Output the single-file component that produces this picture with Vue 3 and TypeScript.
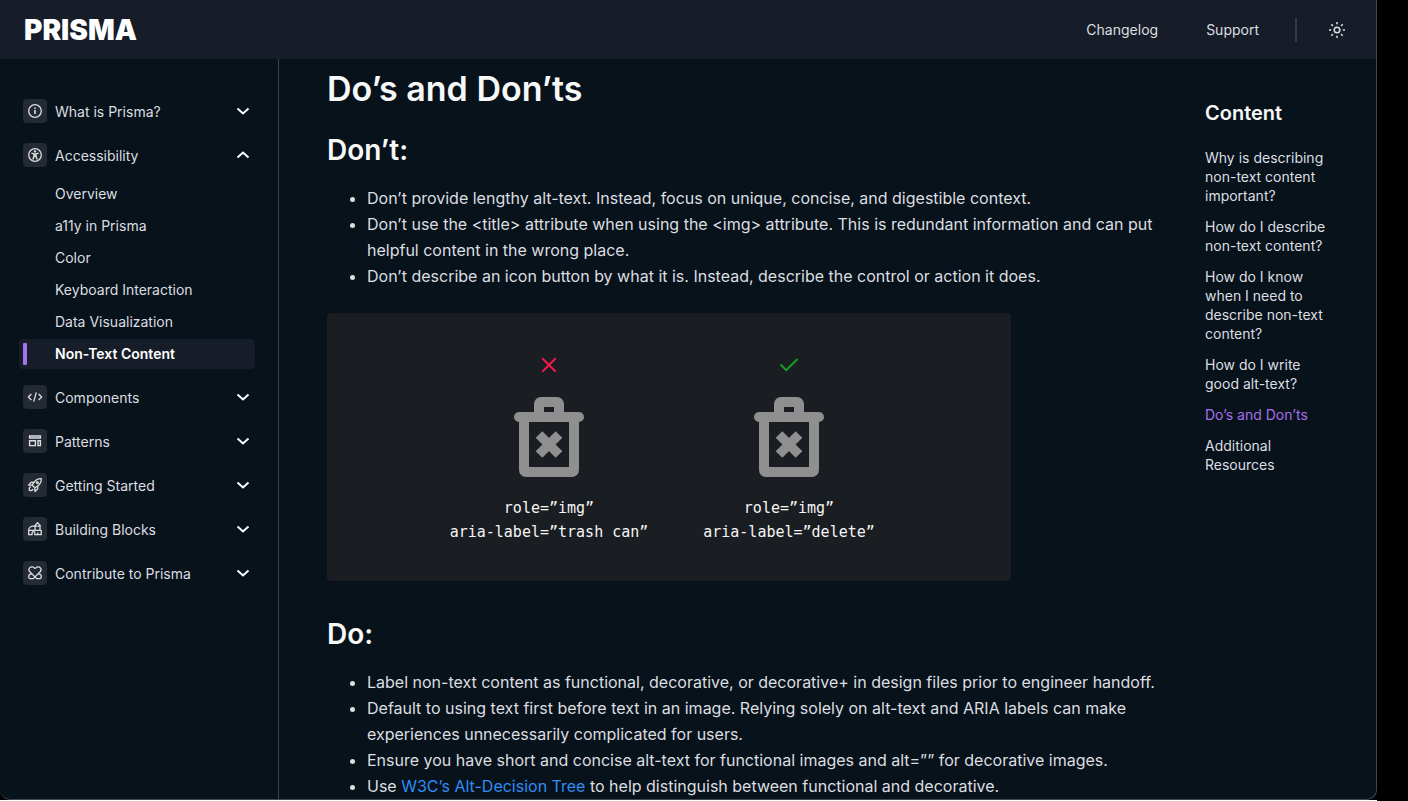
<script setup lang="ts">
import { ref } from 'vue'

interface Group {
  id: string
  label: string
  children: string[]
}

const groups: Group[] = [
  { id: 'info', label: 'What is Prisma?', children: [] },
  {
    id: 'a11y',
    label: 'Accessibility',
    children: ['Overview', 'a11y in Prisma', 'Color', 'Keyboard Interaction', 'Data Visualization', 'Non-Text Content'],
  },
  { id: 'code', label: 'Components', children: [] },
  { id: 'layout', label: 'Patterns', children: [] },
  { id: 'rocket', label: 'Getting Started', children: [] },
  { id: 'blocks', label: 'Building Blocks', children: [] },
  { id: 'heart', label: 'Contribute to Prisma', children: [] },
]

const openGroup = ref('a11y')
const currentPage = ref('Non-Text Content')
const currentSection = ref('Do’s and Don’ts')

const sections: string[] = [
  'Why is describing non-text content important?',
  'How do I describe non-text content?',
  'How do I know when I need to describe non-text content?',
  'How do I write good alt-text?',
  'Do’s and Don’ts',
  'Additional Resources',
]

const examples = [
  { good: false, label: 'aria-label=”trash can”' },
  { good: true, label: 'aria-label=”delete”' },
]

function toggle(id: string) {
  openGroup.value = openGroup.value === id ? '' : id
}
</script>

<template>
  <div class="desktop">
    <div class="window">
      <header class="topbar">
        <a class="logo" href="#">PRISMA</a>
        <nav class="toplinks" aria-label="Site">
          <a href="#changelog">Changelog</a>
          <a href="#support">Support</a>
          <span class="rule"></span>
          <button class="theme" type="button" aria-label="Switch theme">
            <svg viewBox="0 0 18 18" width="18" height="18" fill="none" stroke="currentColor" stroke-width="1.5">
              <circle cx="9" cy="9" r="2.8" />
              <path d="M9 1v2.2M9 14.8V17M1 9h2.2M14.8 9H17M3.3 3.3l1.6 1.6M13.1 13.1l1.6 1.6M3.3 14.7l1.6-1.6M13.1 4.9l1.6-1.6" />
            </svg>
          </button>
        </nav>
      </header>

      <div class="body">
        <nav class="sidebar" aria-label="Documentation">
          <div v-for="g in groups" :key="g.id">
            <button class="group" type="button" :aria-expanded="openGroup === g.id" @click="toggle(g.id)">
              <span class="tile">
                <svg viewBox="0 0 16 16" width="16" height="16" fill="none" stroke="currentColor" stroke-width="1.3" stroke-linejoin="round">
                  <template v-if="g.id === 'info'">
                    <circle cx="8" cy="8" r="6.3" />
                    <path d="M8 7.1v4M8 4.6v1.5" stroke-width="1.6" />
                  </template>
                  <template v-else-if="g.id === 'a11y'">
                    <circle cx="8" cy="8" r="6.3" />
                    <circle cx="8" cy="4.4" r="1.2" fill="currentColor" stroke="none" />
                    <path d="M4.4 6.1l2.6.8v2.3L5.8 12.4M11.6 6.1L9 6.9v2.3l1.2 3.2M7 7h2M7 9.2h2" stroke-width="1.5" />
                  </template>
                  <template v-else-if="g.id === 'code'">
                    <path d="M4.4 5L1.3 8l3.1 3M11.6 5l3.1 3-3.1 3M9.3 3.4L6.7 12.6" />
                  </template>
                  <template v-else-if="g.id === 'layout'">
                    <path d="M2.6 3h10.8v2H2.6zM2.6 7.7h5.8v4.9H2.6zM11 7.7h2.4v4.9H11z" stroke-width="1.4" stroke-linejoin="miter" />
                  </template>
                  <template v-else-if="g.id === 'rocket'">
                    <path d="M14.3 1.6c-3.3 0-5.7 1.2-7.3 3.7L5.2 8.2l2.6 2.6 2.9-1.8c2.5-1.6 3.7-4 3.6-7.4z" />
                    <path d="M7 5.3l-2.7-.1-2.8 2.9 3.7.1M10.7 9l.1 2.7L8 14.5l-.2-3.7M3.7 9.6c-1.5.6-1.6 2.1-1.3 3.8 1.6.4 3.2.1 3.8-1.3" />
                    <circle cx="10.4" cy="5.6" r="0.9" />
                  </template>
                  <template v-else-if="g.id === 'blocks'">
                    <path d="M7.4 4.9C4.2 4.9 1.7 6.6 1.7 9.3v4.4h3.4v-1.9c0-1.6 2.7-1.6 2.7 0v1.9h3v-2.3M1.7 9.3h12.5v4.4h-3.4M8 9.3V5.1h5v4.2M7.4 5.1l3.1-3.5 3.2 3.5" />
                  </template>
                  <template v-else>
                    <path d="M8 3.6C6.6 1.6 4.3 1.3 2.9 2.6 1.6 3.9 1.8 5.7 3.1 7l6.4 6.3h3.3q1.400 0 1.400-1.200v-1.600c0-1.600-1.400-2.200-2.500-1.300L5.800 13.300" stroke="none" />
                    <path d="M8 3.600C6.600 1.600 4.300 1.300 2.900 2.600 1.600 3.900 1.800 5.700 3.100 7l6.600 6.600h3.100q1.400 0 1.400-1.300v-1.500c0-1.500-1.500-2.100-2.500-1.100" />
                    <path d="M8 3.600C9.400 1.600 11.700 1.300 13.100 2.600c1.300 1.300 1.100 3.100-.2 4.400L6.300 13.600H3.200q-1.400 0-1.400-1.300v-1.500c0-1.500 1.500-2.100 2.500-1.100" />
                  </template>
                </svg>
              </span>
              <span class="name">{{ g.label }}</span>
              <svg class="chevron" :class="{ up: openGroup === g.id }" viewBox="0 0 14 14" width="14" height="14" fill="none" stroke="currentColor" stroke-width="2">
                <path d="M1.500 4.500L7 9.500l5.500-5" />
              </svg>
            </button>
            <ul v-if="openGroup === g.id && g.children.length" class="pages">
              <li v-for="p in g.children" :key="p">
                <a href="#" :class="{ active: p === currentPage }" @click.prevent="currentPage = p">{{ p }}</a>
              </li>
            </ul>
          </div>
        </nav>

        <main class="article">
          <h1>Do’s and Don’ts</h1>
          <h2>Don’t:</h2>
          <ul>
            <li>Don’t provide lengthy alt-text. Instead, focus on unique, concise, and digestible context.</li>
            <li>Don’t use the &lt;title&gt; attribute when using the &lt;img&gt; attribute. This is redundant information and can put helpful content in the wrong place.</li>
            <li>Don’t describe an icon button by what it is. Instead, describe the control or action it does.</li>
          </ul>
          <figure>
            <div v-for="e in examples" :key="e.label" class="example">
              <svg v-if="e.good" class="good" viewBox="0 0 24 24" width="24" height="24" fill="none" stroke="currentColor" stroke-width="2">
                <path d="M3.500 11.500L9.200 17.200 20.500 6" />
              </svg>
              <svg v-else class="bad" viewBox="0 0 24 24" width="24" height="24" fill="none" stroke="currentColor" stroke-width="2">
                <path d="M5.300 5.300l13.400 13.400M18.700 5.300L5.300 18.700" />
              </svg>
              <svg class="trash" viewBox="0 0 70 80" width="70" height="80" fill="currentColor">
                <path fill-rule="evenodd" d="M20 15V7a7 7 0 0 1 7-7h16a7 7 0 0 1 7 7v8h15a5 5 0 0 1 0 10v48a7 7 0 0 1-7 7H12a7 7 0 0 1-7-7V25a5 5 0 0 1 0-10zM30 10v5h10v-5zM15 25v45h40V25z" />
                <path d="M25 37.500l20 20M45 37.500l-20 20" stroke="currentColor" stroke-width="9.400" />
              </svg>
              <code>role=”img”<br />{{ e.label }}</code>
            </div>
          </figure>
          <h2>Do:</h2>
          <ul>
            <li>Label non-text content as functional, decorative, or decorative+ in design files prior to engineer handoff.</li>
            <li>Default to using text first before text in an image. Relying solely on alt-text and ARIA labels can make experiences unnecessarily complicated for users.</li>
            <li>Ensure you have short and concise alt-text for functional images and alt=”” for decorative images.</li>
            <li>Use <a href="#">W3C’s Alt-Decision Tree</a> to help distinguish between functional and decorative.</li>
          </ul>
        </main>

        <aside class="toc" aria-labelledby="toc-title">
          <h3 id="toc-title">Content</h3>
          <ul>
            <li v-for="s in sections" :key="s">
              <a href="#" :class="{ active: s === currentSection }" @click.prevent="currentSection = s">{{ s }}</a>
            </li>
          </ul>
        </aside>
      </div>
    </div>
    <div class="edge"></div>
  </div>
</template>

<style>
body {
  margin: 0;
  background: #000;
}
</style>

<style scoped>
* {
  box-sizing: border-box;
}

.desktop {
  display: flex;
  flex-direction: column;
  height: 100vh;
  padding-right: 31px;
  background: #000;
  color: #dcdee0;
  font-family: Inter, 'Liberation Sans', sans-serif;
  font-size: 14px;
}

.edge {
  flex: none;
  height: 1px;
  background: #fff;
}

.window {
  display: flex;
  flex: 1;
  flex-direction: column;
  min-height: 0;
  overflow: hidden;
  background: #08121b;
  border: solid #3f464e;
  border-width: 0 1px 1px 0;
  border-radius: 0 0 10px 10px;
}

a {
  color: inherit;
  text-decoration: none;
}

button {
  padding: 0;
  border: 0;
  background: none;
  color: inherit;
  font: inherit;
  cursor: pointer;
}

ul {
  margin: 0;
  padding: 0;
  list-style: none;
}

svg {
  display: block;
}

.topbar {
  display: flex;
  flex: none;
  align-items: center;
  justify-content: space-between;
  height: 59px;
  padding: 0 30px 0 24px;
  background: #171d28;
}

.logo {
  color: #fff;
  font-size: 28px;
  font-weight: 900;
  line-height: 40px;
}

.toplinks {
  display: flex;
  align-items: center;
}

.toplinks a {
  margin-right: 48px;
}

.toplinks a + a {
  margin-right: 36px;
}

.rule {
  width: 2px;
  height: 24px;
  margin-right: 31px;
  background: #343b45;
}

.body {
  display: grid;
  flex: 1;
  grid-template-columns: 279px minmax(0, 1fr) 171px;
  min-height: 0;
}

.sidebar {
  padding: 30px 23px 0;
  border-right: 1px solid #3a424a;
}

.group {
  display: flex;
  align-items: center;
  width: 100%;
  height: 44px;
  padding-right: 5px;
  text-align: left;
}

.tile {
  display: grid;
  place-items: center;
  width: 24px;
  height: 24px;
  margin-right: 8px;
  background: #232a33;
  border-radius: 4px;
}

.name {
  flex: 1;
}

.chevron {
  color: #fff;
}

.chevron.up {
  transform: rotate(180deg);
}

.pages {
  margin: 0 0 2px -4px;
  padding: 2px 0;
}

.pages a {
  display: block;
  margin: 0 0 2px;
  padding-left: 36px;
  line-height: 30px;
  border-radius: 4px;
}

.pages a.active {
  position: relative;
  background: #171d28;
  color: #fff;
  font-weight: 600;
}

.pages a.active::before {
  position: absolute;
  top: 4px;
  bottom: 4px;
  left: 4px;
  width: 4px;
  background: #a673ef;
  border-radius: 1px;
  content: '';
}

.article {
  min-width: 0;
  padding: 8px 40px 0 48px;
  overflow: hidden;
  font-size: 16px;
  line-height: 26px;
}

h1,
h2,
h3 {
  margin: 0;
  color: #f7f8f8;
  font-weight: 600;
}

h1 {
  margin-bottom: 20px;
  font-size: 34px;
  line-height: 44px;
}

h2 {
  margin-bottom: 16px;
  font-size: 28px;
  line-height: 38px;
}

.article ul {
  padding-left: 40px;
  list-style: disc;
}

.article ul a {
  color: #2f8df5;
}

figure {
  display: flex;
  justify-content: center;
  max-width: 684px;
  margin: 24px 0 34px;
  padding: 40px 0 37px;
  background: #1a1d21;
  border-radius: 4px;
}

.example {
  display: flex;
  flex-direction: column;
  align-items: center;
  width: 240px;
}

.bad {
  color: #f5184c;
}

.good {
  color: #12a324;
}

.trash {
  margin: 20px 0 19px;
  color: #8f8f8f;
}

code {
  color: #f5f5f5;
  font-family: 'DejaVu Sans Mono', monospace;
  font-size: 15px;
  line-height: 24px;
  text-align: center;
}

.toc {
  padding: 40px 48px 0 0;
  line-height: 19px;
}

.toc h3 {
  margin-bottom: 21px;
  font-size: 20px;
  line-height: 28px;
}

.toc li {
  margin-bottom: 12px;
}

.toc .active {
  color: #a56fe8;
}
</style>
